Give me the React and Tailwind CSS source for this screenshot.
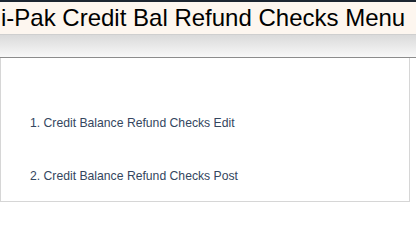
import React from 'react';

const items = [
  '1. Credit Balance Refund Checks Edit',
  '2. Credit Balance Refund Checks Post',
];

function App() {
  return (
    <div className="w-[416px] h-[203px] bg-white font-['Liberation_Sans',Arial,sans-serif]">
      <div className="border-t-2 border-[#1c2530] bg-[#fdf6ef] border-b border-b-[#cfcfcf] h-[35px] overflow-hidden">
        <h1 className="text-[24px] leading-[32px] text-black whitespace-nowrap pl-px">
          i-Pak Credit Bal Refund Checks Menu
        </h1>
      </div>
      <div className="h-[23px] bg-gradient-to-b from-[#dadada] to-[#f8f8f8] border-b border-[#8c8c8c]" />
      <div className="w-[410px] h-[144px] border-l border-r border-b border-[#d6d6d6] pt-[58px] pl-[29px]">
        <ul className="flex flex-col gap-[39px] text-[12.2px] leading-[14px]">
          {items.map((item) => (
            <li key={item}>
              <a href="#" className="text-[#34465e]">
                {item}
              </a>
            </li>
          ))}
        </ul>
      </div>
    </div>
  );
}

export default App;
